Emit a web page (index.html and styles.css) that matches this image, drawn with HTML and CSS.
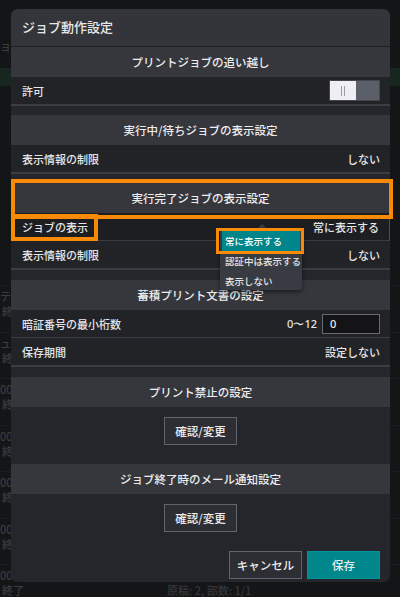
FILE: index.html
```html
<!DOCTYPE html>
<html lang="ja">
<head>
<meta charset="utf-8">
<title>ジョブ動作設定</title>
<link rel="stylesheet" href="styles.css">
</head>
<body>
<div class="bg">
  <div class="bg-top"><span class="bg-tab">ョ</span></div>
  <div class="bg-band"></div>
  <div class="bg-spacer"></div>
  <div class="bg-row"><div class="bg-l1">テ</div><div class="bg-l2">終</div></div>
  <div class="bg-row"><div class="bg-l1">ュ</div><div class="bg-l2">終</div></div>
  <div class="bg-row"><div class="bg-l1">00</div><div class="bg-l2">終</div></div>
  <div class="bg-row"><div class="bg-l1">00</div><div class="bg-l2">終</div></div>
  <div class="bg-row"><div class="bg-l1">00</div><div class="bg-l2">終</div></div>
  <div class="bg-row"><div class="bg-l1">00</div><div class="bg-l2">終</div></div>
  <div class="bg-row"><div class="bg-l1">00</div><div class="bg-l2"><span>終了</span><span class="bg-meta">原稿: 2, 部数: 1/1</span></div></div>
</div>

<div class="modal">
  <div class="title">ジョブ動作設定</div>

  <div class="section">
    <div class="sec-head">プリントジョブの追い越し</div>
    <div class="row last">
      <span class="label">許可</span>
      <span class="toggle"><span class="thumb"><i></i><i></i></span></span>
    </div>
  </div>

  <div class="section">
    <div class="sec-head">実行中/待ちジョブの表示設定</div>
    <div class="row last">
      <span class="label">表示情報の制限</span>
      <span class="value">しない</span>
    </div>
  </div>

  <div class="section wide">
    <div class="sec-head">実行完了ジョブの表示設定</div>
    <div class="row focus">
      <span class="label">ジョブの表示</span>
      <span class="value">常に表示する</span>
    </div>
    <div class="row last">
      <span class="label">表示情報の制限</span>
      <span class="value">しない</span>
    </div>
  </div>

  <div class="section wide">
    <div class="sec-head">蓄積プリント文書の設定</div>
    <div class="row">
      <span class="label">暗証番号の最小桁数</span>
      <span class="value-group"><span class="range">0〜12</span><span class="input">0</span></span>
    </div>
    <div class="row last">
      <span class="label">保存期間</span>
      <span class="value">設定しない</span>
    </div>
  </div>

  <div class="section">
    <div class="sec-head">プリント禁止の設定</div>
    <div class="sec-body"><span class="btn">確認/変更</span></div>
  </div>

  <div class="section">
    <div class="sec-head">ジョブ終了時のメール通知設定</div>
    <div class="sec-body"><span class="btn">確認/変更</span></div>
  </div>

  <div class="footer">
    <span class="btn btn-cancel">キャンセル</span>
    <span class="btn btn-save">保存</span>
  </div>
</div>

<div class="menu">
  <div class="menu-caret"></div>
  <div class="menu-item selected">常に表示する</div>
  <div class="menu-item">認証中は表示する</div>
  <div class="menu-item">表示しない</div>
</div>

<div class="mark mark-head"></div>
<div class="mark mark-label"></div>
<div class="mark mark-item"></div>
</body>
</html>
```
FILE: styles.css
```css
* { box-sizing: border-box; }

body {
  margin: 0;
  width: 400px;
  height: 597px;
  overflow: hidden;
  background: #141517;
  font-family: "Noto Sans CJK JP", "Noto Sans", sans-serif;
  font-weight: 500;
  color: #e6e6e6;
  position: relative;
}

/* background page (dimmed) */
.bg { color: #3b3c40; font-size: 11px; }
.bg-top { height: 68px; padding-top: 38px; }
.bg-tab { display: inline-block; line-height: 16px; }
.bg-band { height: 18px; background: #17271f; }
.bg-spacer { height: 200px; border-bottom: 1px solid #1c1d20; }
.bg-row { height: 46.5px; padding-top: 3px; border-bottom: 1px solid #1c1d20; line-height: 15px; }
.bg-l2 { display: flex; gap: 143px; padding-left: 2px; }
.bg-meta { color: #36373a; }

/* modal */
.modal {
  position: absolute;
  left: 11px;
  top: 9px;
  width: 379px;
  height: 573px;
  background: #25262b;
  border-radius: 7px;
  display: flex;
  flex-direction: column;
  overflow: hidden;
}

.title {
  height: 38px;
  flex: none;
  background: #33353b;
  border-bottom: 1px solid #1d1e22;
  padding-left: 11px;
  font-size: 13px;
  line-height: 36px;
  color: #e8e8e8;
}

.section { margin-bottom: 9px; flex: none; }
.section.wide { margin-bottom: 10px; }

.sec-head {
  height: 30px;
  background: #35373d;
  text-align: center;
  font-size: 11.5px;
  line-height: 30px;
  color: #ededed;
}

.row {
  height: 28px;
  background: #222327;
  border-bottom: 1px solid #393c43;
  display: flex;
  align-items: center;
  justify-content: space-between;
  padding: 0 10px 0 11px;
  font-size: 11px;
}
.row.last { border-bottom: 2px solid #3a3d44; height: 29px; }
.row.focus { background: #1d1e22; border-right: 1px solid #4a4d55; }

.label { color: #e6e6e6; }
.value { color: #e6e6e6; }

.toggle {
  width: 51px;
  height: 21px;
  background: #5b5f69;
  border: 1px solid #44474e;
  display: flex;
}
.thumb {
  width: 26px;
  height: 100%;
  background: #eeeef3;
  display: flex;
  justify-content: center;
  align-items: center;
  gap: 2px;
}
.thumb i {
  display: block;
  width: 1px;
  height: 10px;
  background: #9a9da6;
}

.value-group { display: flex; align-items: center; gap: 5px; }
.range { font-family: "Noto Sans", "Liberation Sans", sans-serif; font-size: 11px; }
.input {
  width: 58px;
  height: 20px;
  background: #141416;
  border: 1px solid #666a72;
  padding-left: 7px;
  font-family: "Noto Sans", "Liberation Sans", sans-serif;
  font-size: 11px;
  line-height: 18px;
  color: #f0f0f0;
}

.sec-body {
  height: 48px;
  display: flex;
  align-items: center;
  justify-content: center;
}

.btn {
  display: inline-flex;
  align-items: center;
  justify-content: center;
  width: 73px;
  height: 28px;
  background: #2c2e34;
  border: 1px solid #60646d;
  font-size: 11.5px;
  color: #ececec;
}

.footer {
  margin-top: auto;
  display: flex;
  justify-content: flex-end;
  gap: 5px;
  padding: 0 10px 10px 0;
}
.btn-cancel { width: 73px; }
.btn-save { width: 73px; background: #00878c; border-color: #00959a; }

/* dropdown menu (overlay) */
.menu {
  position: absolute;
  left: 220px;
  top: 228px;
  width: 82px;
  height: 62px;
  background: #393b42;
  border-radius: 3px;
  box-shadow: 0 2px 4px rgba(0,0,0,0.5);
  padding: 3px 2px 0 2px;
}
.menu-caret {
  position: absolute;
  left: 38px;
  top: -4px;
  width: 0;
  height: 0;
  border-left: 4px solid transparent;
  border-right: 4px solid transparent;
  border-bottom: 4px solid #393b42;
}
.menu-item {
  height: 20px;
  line-height: 20px;
  font-size: 9.5px;
  padding-left: 3px;
  color: #e4e4e4;
  white-space: nowrap;
}
.menu-item.selected { background: #00858a; color: #ffffff; }

/* orange annotation boxes */
.mark {
  position: absolute;
  border: 4px solid #f98a06;
}
.mark-head { left: 11px; top: 179px; width: 382px; height: 40px; }
.mark-label { left: 11px; top: 214px; width: 87px; height: 27px; }
.mark-item { left: 216px; top: 228px; width: 88px; height: 26px; border-width: 3px; }
```
